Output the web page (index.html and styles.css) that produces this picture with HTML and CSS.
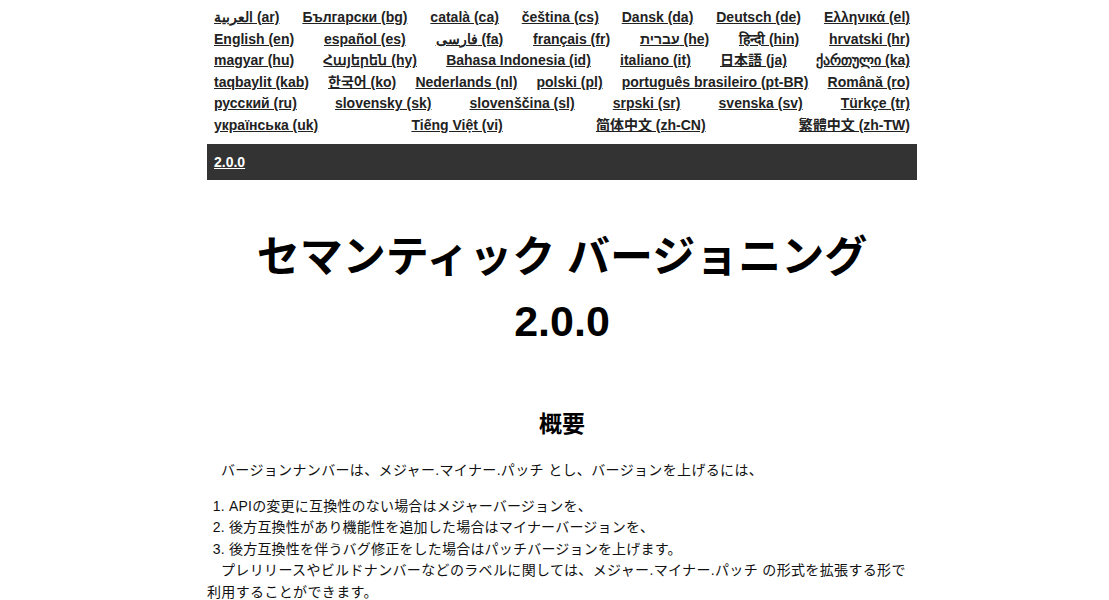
FILE: index.html
```html
<!DOCTYPE html>
<html lang="ja">
<head>
<meta charset="utf-8">
<title>セマンティック バージョニング 2.0.0</title>
<link rel="stylesheet" href="styles.css">
</head>
<body>
<div class="page">
  <nav class="langs">
    <div class="row">
      <a href="#">العربية (ar)</a><a href="#">Български (bg)</a><a href="#">català (ca)</a><a href="#">čeština (cs)</a><a href="#">Dansk (da)</a><a href="#">Deutsch (de)</a><a href="#">Ελληνικά (el)</a>
    </div>
    <div class="row">
      <a href="#">English (en)</a><a href="#">español (es)</a><a href="#">فارسی (fa)</a><a href="#">français (fr)</a><a href="#">עברית (he)</a><a href="#">हिन्दी (hin)</a><a href="#">hrvatski (hr)</a>
    </div>
    <div class="row">
      <a href="#">magyar (hu)</a><a href="#">Հայերեն (hy)</a><a href="#">Bahasa Indonesia (id)</a><a href="#">italiano (it)</a><a href="#">日本語 (ja)</a><a href="#">ქართული (ka)</a>
    </div>
    <div class="row">
      <a href="#">taqbaylit (kab)</a><a href="#">한국어 (ko)</a><a href="#">Nederlands (nl)</a><a href="#">polski (pl)</a><a href="#">português brasileiro (pt-BR)</a><a href="#">Română (ro)</a>
    </div>
    <div class="row">
      <a href="#">русский (ru)</a><a href="#">slovensky (sk)</a><a href="#">slovenščina (sl)</a><a href="#">srpski (sr)</a><a href="#">svenska (sv)</a><a href="#">Türkçe (tr)</a>
    </div>
    <div class="row">
      <a href="#">українська (uk)</a><a href="#">Tiếng Việt (vi)</a><a href="#">简体中文 (zh-CN)</a><a href="#">繁體中文 (zh-TW)</a>
    </div>
  </nav>
  <div class="versionbar"><a href="#">2.0.0</a></div>
  <h1 class="title">セマンティック バージョニング<br>2.0.0</h1>
  <h2 class="section">概要</h2>
  <p class="para">バージョンナンバーは、メジャー.マイナー.パッチ とし、バージョンを上げるには、</p>
  <ol class="rules">
    <li>APIの変更に互換性のない場合はメジャーバージョンを、</li>
    <li>後方互換性があり機能性を追加した場合はマイナーバージョンを、</li>
    <li>後方互換性を伴うバグ修正をした場合はパッチバージョンを上げます。</li>
  </ol>
  <p class="para tight">プレリリースやビルドナンバーなどのラベルに関しては、メジャー.マイナー.パッチ の形式を拡張する形で利用することができます。</p>
</div>
</body>
</html>
```

FILE: styles.css
```css
html, body {
  margin: 0;
  background: #fff;
}
body {
  padding-left: 15px;
  font-family: "Liberation Sans", Arial, "Noto Sans CJK JP", sans-serif;
  font-size: 14px;
  line-height: 1.54;
  color: #111;
}
.page {
  width: 710px;
  margin: 0 auto;
}
.langs {
  padding: 7px 7px 8px;
}
.row {
  display: flex;
  justify-content: space-between;
  white-space: nowrap;
}
.langs a {
  color: #222;
  font-weight: bold;
  text-decoration: underline;
}
.versionbar {
  background: #333;
  height: 36px;
  padding: 0 7px;
  display: flex;
  align-items: center;
}
.versionbar a {
  color: #fff;
  font-weight: bold;
  text-decoration: underline;
}
.title {
  margin: 45px 0 0;
  text-align: center;
  font-size: 43px;
  line-height: 64px;
  font-weight: bold;
  color: #000;
}
.section {
  margin: 54px 0 0;
  text-align: center;
  font-size: 23px;
  line-height: 35px;
  font-weight: bold;
  color: #000;
}
.para {
  margin: 18px 0 0;
  text-indent: 1em;
  letter-spacing: 0.35px;
}
.para.tight {
  margin-top: 0;
}
.rules {
  margin: 14px 0 0;
  padding-left: 22px;
  letter-spacing: 0.2px;
}
```
